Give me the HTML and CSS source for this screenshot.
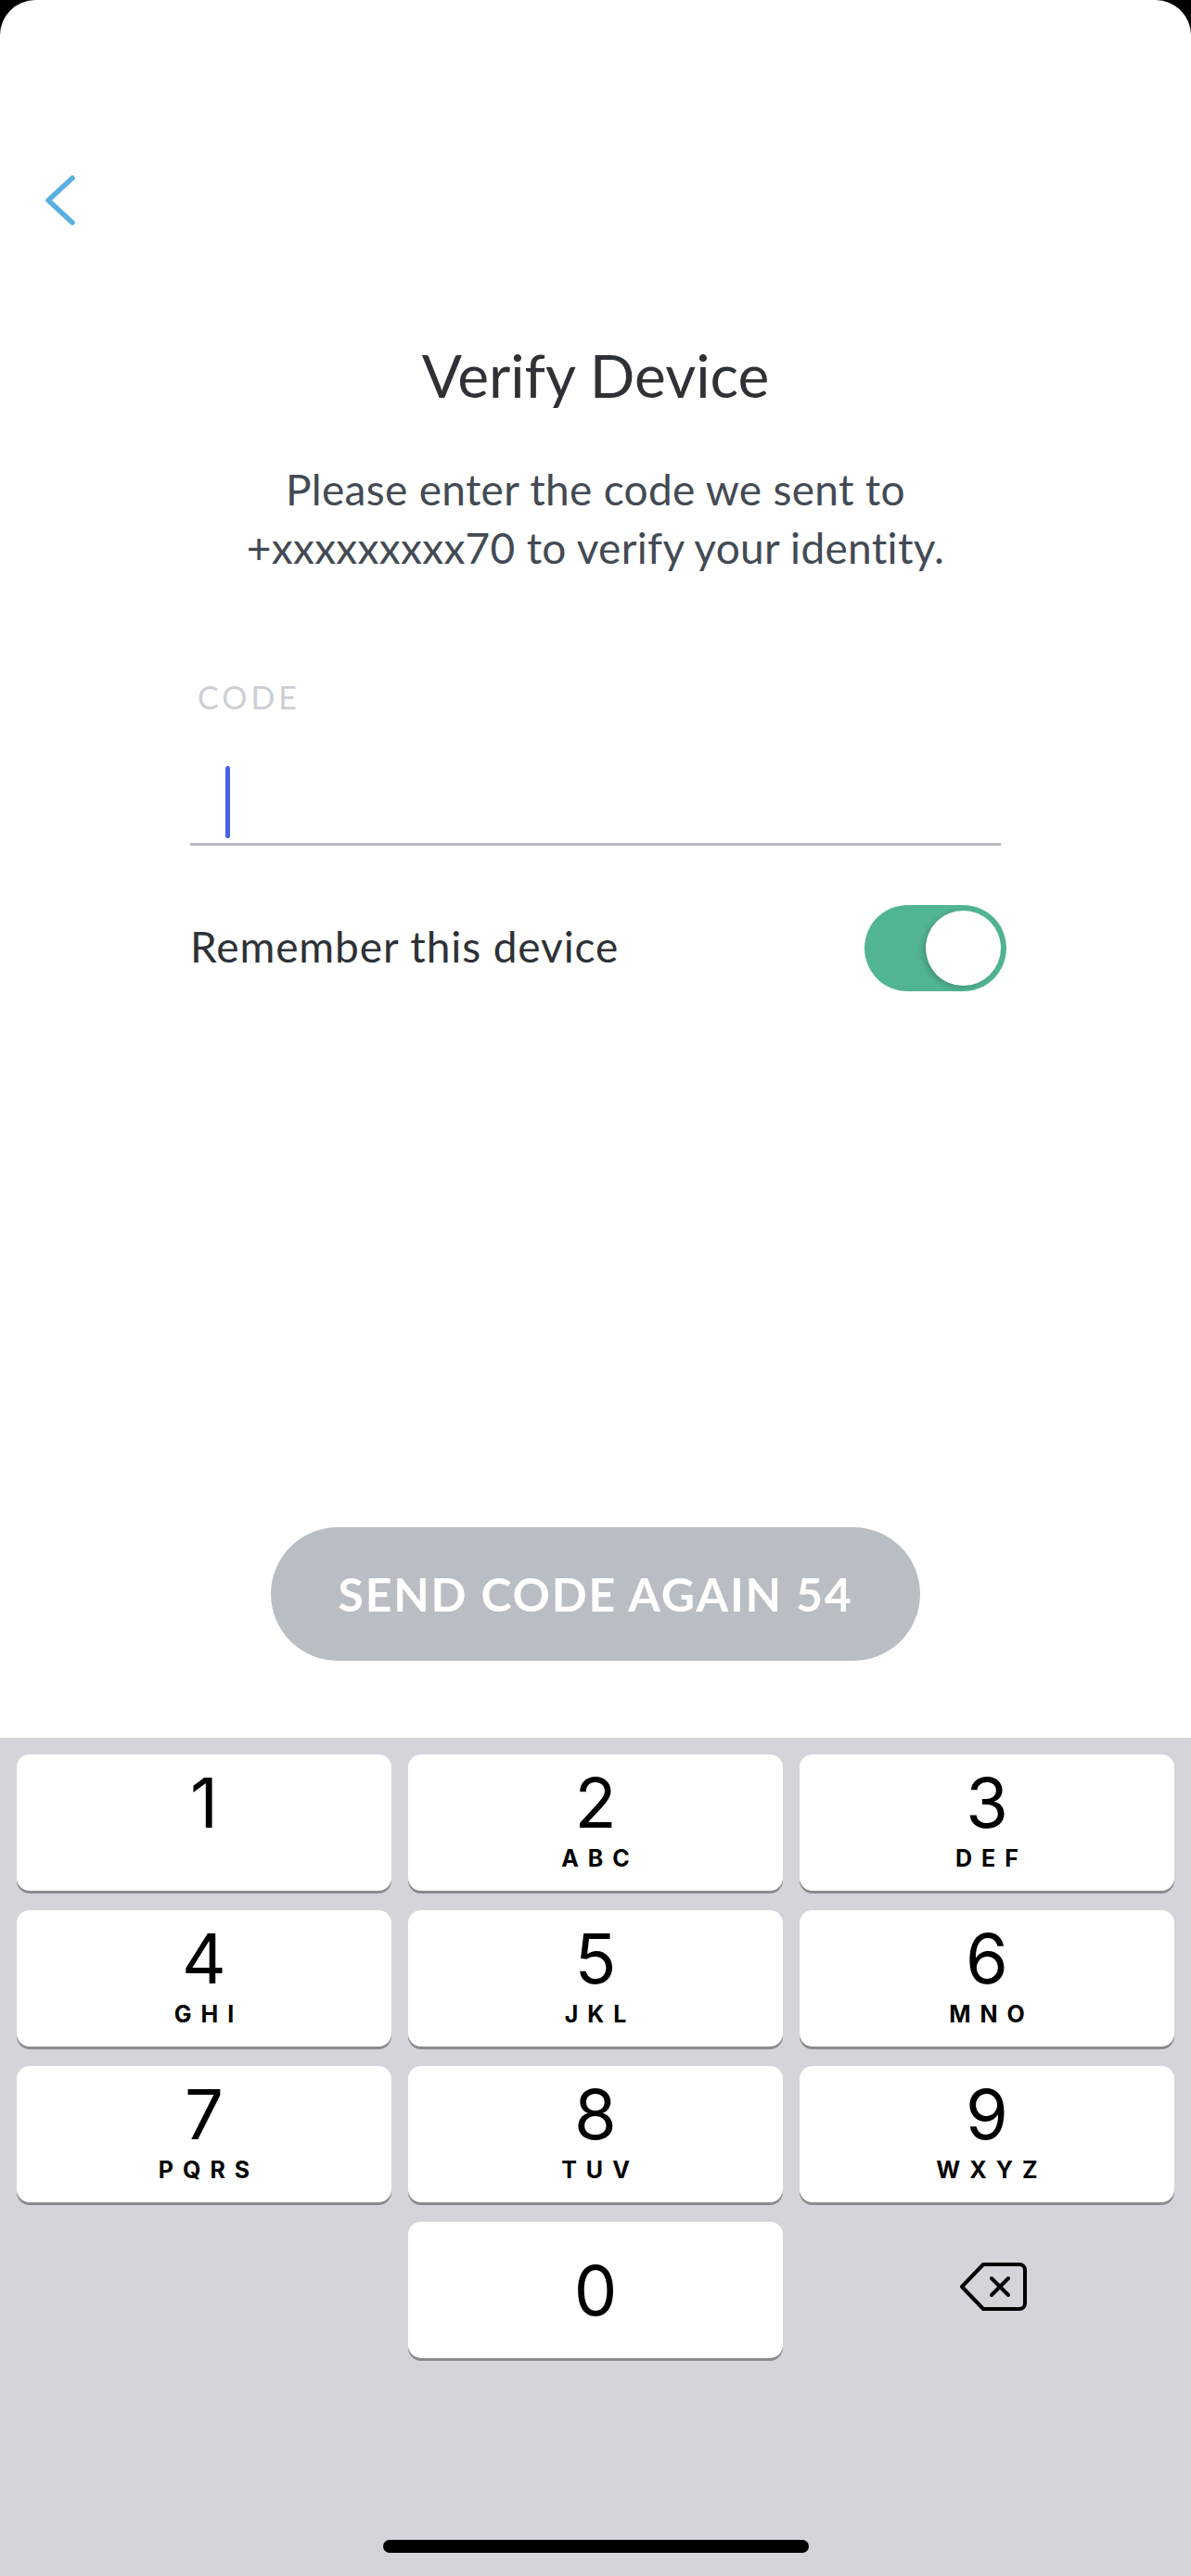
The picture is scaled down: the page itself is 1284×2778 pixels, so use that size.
FILE: index.html
```html
<!DOCTYPE html>
<html lang="en">

<head>
    <meta charset="UTF-8">
    <meta name="viewport" content="width=device-width, initial-scale=1.0">
    <title>Verify Device</title>
    <link rel="stylesheet" href="styles.css">
</head>

<body>
    <div class="screen">
        <div class="sheet">
            <div class="nav">
                <svg class="back" width="36" height="56" viewBox="0 0 36 56">
                    <path d="M30 4 L4 28 L30 52" fill="none" stroke="#5aaee0" stroke-width="5.5" stroke-linecap="round" stroke-linejoin="round" />
                </svg>
            </div>

            <h1 class="title">Verify Device</h1>
            <p class="subtitle">Please enter the code we sent to<br>+xxxxxxxxx70 to verify your identity.</p>

            <div class="field">
                <div class="field-label">CODE</div>
                <div class="field-input"><span class="caret"></span></div>
            </div>

            <div class="remember">
                <span>Remember this device</span>
                <span class="toggle"><span class="knob"></span></span>
            </div>

            <div class="actions">
                <div class="resend">SEND CODE AGAIN 54</div>
            </div>
        </div>

        <div class="keyboard">
            <div class="keys">
                <div class="key"><span class="num">1</span><span class="abc"></span></div>
                <div class="key"><span class="num">2</span><span class="abc">ABC</span></div>
                <div class="key"><span class="num">3</span><span class="abc">DEF</span></div>
                <div class="key"><span class="num">4</span><span class="abc">GHI</span></div>
                <div class="key"><span class="num">5</span><span class="abc">JKL</span></div>
                <div class="key"><span class="num">6</span><span class="abc">MNO</span></div>
                <div class="key"><span class="num">7</span><span class="abc">PQRS</span></div>
                <div class="key"><span class="num">8</span><span class="abc">TUV</span></div>
                <div class="key"><span class="num">9</span><span class="abc">WXYZ</span></div>
                <div class="blank"></div>
                <div class="key zero"><span class="num">0</span></div>
                <div class="delete">
                    <svg width="74" height="54" viewBox="0 0 74 54">
                        <path d="M26 3 H65 A6 6 0 0 1 71 9 V45 A6 6 0 0 1 65 51 H26 L3 27 Z" fill="none" stroke="#000" stroke-width="4" stroke-linejoin="round" />
                        <path d="M35 18 L53 36 M53 18 L35 36" fill="none" stroke="#000" stroke-width="4" stroke-linecap="round" />
                    </svg>
                </div>
            </div>
            <div class="home-bar"></div>
        </div>
    </div>
</body>

</html>
```

FILE: styles.css
```css
* {
    margin: 0;
    padding: 0;
    box-sizing: border-box;
}

body {
    background: #000;
    font-family: "Lato", "Noto Sans", sans-serif;
}

.screen {
    width: 1284px;
    height: 2778px;
    display: flex;
    flex-direction: column;
}

/* 白色页面部分 */
.sheet {
    height: 1874px;
    background: #fff;
    border-radius: 38px 38px 0 0;
    display: flex;
    flex-direction: column;
    padding: 0 205px;
}

.nav {
    padding-top: 188px;
    margin-left: -157px;
    height: 244px;
}

.back {
    display: block;
}

.title {
    margin-top: 123px;
    font-size: 64px;
    font-weight: 400;
    line-height: 1.2;
    text-align: center;
    color: #2e3136;
}

.subtitle {
    margin-top: 52px;
    font-size: 46px;
    line-height: 63px;
    letter-spacing: 0.3px;
    text-align: center;
    color: #434a54;
    margin-left: -60px;
    margin-right: -60px;
}

.field {
    margin-top: 110px;
}

.field-label {
    padding-left: 8px;
    font-size: 34px;
    line-height: 1.2;
    letter-spacing: 4px;
    color: #cbcfd5;
}

.field-input {
    height: 139px;
    padding: 53px 0 0 38px;
    border-bottom: 3px solid #b8bcc2;
}

.caret {
    display: block;
    width: 5px;
    height: 78px;
    border-radius: 3px;
    background: #4862e6;
}

.remember {
    margin-top: 64px;
    margin-right: -6px;
    display: flex;
    align-items: center;
    justify-content: space-between;
    font-size: 46px;
    letter-spacing: 0.9px;
    color: #2e3136;
}

.remember span:first-child {
    padding-bottom: 4px;
}

.toggle {
    width: 153px;
    height: 93px;
    border-radius: 47px;
    background: #52b592;
    padding: 6px;
    display: flex;
    justify-content: flex-end;
}

.knob {
    width: 81px;
    height: 81px;
    border-radius: 50%;
    background: #fff;
    box-shadow: -3px 2px 6px rgba(0, 0, 0, 0.18);
}

.actions {
    margin-top: auto;
    margin-bottom: 83px;
    display: flex;
    justify-content: center;
}

.resend {
    width: 700px;
    height: 144px;
    border-radius: 72px;
    background: #b9bdc4;
    color: #fff;
    font-size: 50px;
    font-weight: 700;
    letter-spacing: 1.8px;
    display: flex;
    align-items: center;
    justify-content: center;
}

/* 数字键盘 */
.keyboard {
    flex: 1;
    background: #d4d5da;
    padding-top: 18px;
    display: flex;
    flex-direction: column;
    align-items: center;
}

.keys {
    width: 1284px;
    padding: 0 18px;
    display: grid;
    grid-template-columns: repeat(3, 404px);
    grid-auto-rows: 147px;
    column-gap: 18px;
    row-gap: 21px;
}

.key {
    background: #fff;
    border-radius: 14px;
    box-shadow: 0 3px 0 #8a8b8f;
    display: flex;
    flex-direction: column;
    align-items: center;
    padding-top: 15px;
    font-family: "Inter", "Roboto", sans-serif;
    color: #000;
}

.num {
    font-size: 74px;
    line-height: 74px;
    font-weight: 400;
}

.abc {
    margin-top: 11px;
    height: 24px;
    font-size: 25px;
    line-height: 24px;
    font-weight: 700;
    letter-spacing: 10px;
    padding-left: 10px;
}

.key.zero {
    padding-top: 0;
    justify-content: center;
}

.delete {
    display: flex;
    align-items: center;
    justify-content: center;
    padding: 0 0 7px 14px;
}

.home-bar {
    margin-top: 196px;
    width: 459px;
    height: 14px;
    border-radius: 7px;
    background: #000;
}
```
